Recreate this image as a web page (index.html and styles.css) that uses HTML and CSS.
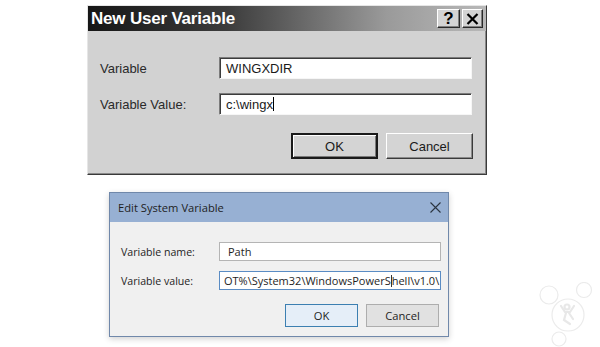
FILE: index.html
```html
<!DOCTYPE html>
<html lang="en">
<head>
    <meta charset="UTF-8">
    <title>Environment Variables</title>
    <link rel="stylesheet" href="styles.css">
</head>
<body>
    <div class="page">
        <!-- Classic dialog -->
        <div class="classic">
            <div class="classic-title">
                <span class="classic-caption">New User Variable</span>
                <div class="caption-buttons">
                    <span class="cap-btn cap-help">?</span>
                    <span class="cap-btn">
                        <svg width="13" height="12" viewBox="0 0 13 12"><path d="M1.5 1 L11.5 11 M11.5 1 L1.5 11" stroke="#000" stroke-width="2.2"/></svg>
                    </span>
                </div>
            </div>
            <div class="classic-body">
                <div class="classic-row">
                    <span class="classic-label">Variable</span>
                    <div class="sunken">WINGXDIR</div>
                </div>
                <div class="classic-row">
                    <span class="classic-label">Variable Value:</span>
                    <div class="sunken">c:\wingx<span class="caret"></span></div>
                </div>
                <div class="classic-buttons">
                    <button class="classic-btn is-default">OK</button>
                    <button class="classic-btn">Cancel</button>
                </div>
            </div>
        </div>

        <!-- Windows 10 dialog -->
        <div class="modern">
            <div class="modern-title">
                <span>Edit System Variable</span>
                <svg class="modern-close" width="11" height="11" viewBox="0 0 11 11"><path d="M0.5 0.5 L10.5 10.5 M10.5 0.5 L0.5 10.5" stroke="#2b3440" stroke-width="1.1"/></svg>
            </div>
            <div class="modern-body">
                <div class="modern-row">
                    <span class="modern-label">Variable name:</span>
                    <div class="modern-input">Path</div>
                </div>
                <div class="modern-row">
                    <span class="modern-label">Variable value:</span>
                    <div class="modern-input is-focused">OT%\System32\WindowsPowerS<span class="caret"></span>hell\v1.0\</div>
                </div>
                <div class="modern-buttons">
                    <button class="modern-btn is-default">OK</button>
                    <button class="modern-btn">Cancel</button>
                </div>
            </div>
        </div>

        <!-- faint watermark -->
        <svg class="watermark" width="64" height="66" viewBox="0 0 64 66">
            <g fill="#fff" stroke="#ebebeb" stroke-width="1.2">
                <circle cx="13" cy="13" r="9"/>
                <circle cx="48" cy="8" r="7.5"/>
                <circle cx="23" cy="57" r="7"/>
                <circle cx="32" cy="33" r="16"/>
            </g>
            <g fill="none" stroke="#e8e8e8" stroke-width="2.2" stroke-linecap="round">
                <circle cx="31" cy="25" r="2.5"/>
                <path d="M25 24 L29 30 L34 30 L38 24 M30 31 L28 38 L34 42 M33 31 L37 37"/>
            </g>
        </svg>
    </div>
</body>
</html>
```

FILE: styles.css
```css
/* General */
body {
    margin: 0;
    padding: 0;
    background: #fff;
    font-family: 'Liberation Sans', Arial, sans-serif;
}

.page {
    position: relative;
    width: 600px;
    height: 347px;
    padding: 5px 0 0 87px;
    box-sizing: border-box;
    overflow: hidden;
}

/* Classic dialog */
.classic {
    width: 400px;
    height: 170px;
    box-sizing: border-box;
    background: #d2d2d2;
    border: 1px solid;
    border-color: #e6e6e6 #3a3a3a #3a3a3a #e6e6e6;
    box-shadow: inset -1px -1px #8a8a8a;
    display: flex;
    flex-direction: column;
}
.classic-title {
    height: 25px;
    display: flex;
    align-items: center;
    justify-content: space-between;
    padding: 0 3px 0 3px;
    background: linear-gradient(90deg, #161616 0%, #3c3c3c 35%, #9a9a9a 75%, #b8b8b8 100%);
}
.classic-caption {
    color: #fff;
    font-weight: bold;
    font-size: 17px;
    letter-spacing: -0.2px;
}
.caption-buttons {
    display: flex;
    gap: 2px;
}
.cap-btn {
    width: 21px;
    height: 19px;
    background: #d4d4d4;
    border: 1px solid;
    border-color: #fff #2a2a2a #2a2a2a #fff;
    box-shadow: inset -1px -1px #808080;
    display: flex;
    align-items: center;
    justify-content: center;
    box-sizing: border-box;
}
.cap-help {
    font-weight: bold;
    font-size: 17px;
    color: #000;
    width: 23px;
}

.classic-body {
    padding: 26px 13px 0 12px;
    display: flex;
    flex-direction: column;
}
.classic-row {
    display: flex;
    align-items: center;
    margin-bottom: 14px;
}
.classic-label {
    width: 119px;
    font-size: 13px;
    color: #2a2a2a;
}
.sunken {
    width: 253px;
    height: 22px;
    box-sizing: border-box;
    background: #fff;
    border: 1px solid;
    border-color: #7c7c7c #f6f6f6 #f6f6f6 #7c7c7c;
    box-shadow: inset 1px 1px #3c3c3c;
    padding: 3px 0 0 6px;
    font-size: 13px;
    color: #1a1a1a;
}
.caret {
    display: inline-block;
    width: 1px;
    height: 14px;
    background: #000;
    vertical-align: -2px;
}
.classic-buttons {
    display: flex;
    justify-content: flex-end;
    gap: 8px;
    margin-top: 4px;
}
.classic-btn {
    width: 87px;
    height: 26px;
    background: #d4d4d4;
    border: 1px solid;
    border-color: #fff #3a3a3a #3a3a3a #fff;
    box-shadow: inset -1px -1px #8a8a8a;
    font-family: 'Liberation Sans', Arial, sans-serif;
    font-size: 13px;
    color: #1a1a1a;
    padding: 0;
}
.classic-btn.is-default {
    border: 2px solid #1a1a1a;
    box-shadow: inset 1px 1px #fff, inset -1px -1px #7a7a7a;
}

/* Windows 10 dialog */
.modern {
    width: 340px;
    height: 145px;
    margin: 17px 0 0 22px;
    box-sizing: border-box;
    background: #f0f0f0;
    border: 1px solid #7088aa;
    box-shadow: 0 2px 6px rgba(0, 0, 0, 0.18);
    font-family: 'Open Sans', 'Noto Sans', sans-serif;
    font-size: 10.6px;
    color: #1e1e1e;
}
.modern-title {
    height: 29px;
    background: #97b0d3;
    display: flex;
    align-items: center;
    justify-content: space-between;
    padding: 0 6px 0 8px;
    font-size: 11.2px;
}
.modern-close {
    margin-right: 1px;
}
.modern-body {
    padding: 20px 7px 0 11px;
}
.modern-row {
    display: flex;
    align-items: center;
    margin-bottom: 10px;
}
.modern-label {
    width: 98px;
}
.modern-input {
    width: 222px;
    height: 19px;
    box-sizing: border-box;
    background: #fff;
    border: 1px solid #b4b4b4;
    padding: 1px 0 0 8px;
    white-space: nowrap;
    overflow: hidden;
    font-size: 11px;
}
.modern-input.is-focused {
    padding-left: 4px;
    border-color: #5a8cc4;
}
.modern-input .caret {
    height: 12px;
    background: #333;
}
.modern-buttons {
    display: flex;
    justify-content: flex-end;
    gap: 8px;
    margin: 14px 2px 0 0;
}
.modern-btn {
    width: 73px;
    height: 23px;
    background: #e1e1e1;
    border: 1px solid #adadad;
    font-family: 'Open Sans', 'Noto Sans', sans-serif;
    font-size: 11.2px;
    color: #1e1e1e;
    padding: 0;
}
.modern-btn.is-default {
    border-color: #3c7fb1;
    background: #e5eef8;
}

/* watermark */
.watermark {
    position: absolute;
    left: 536px;
    top: 282px;
}
```
